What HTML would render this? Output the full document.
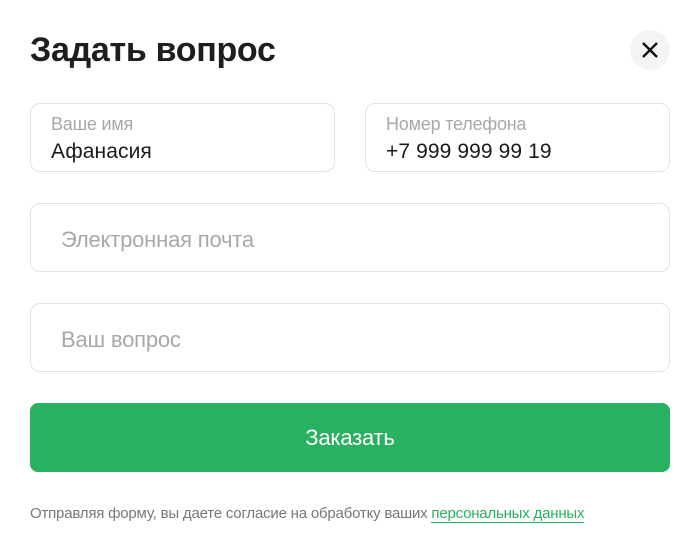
<!DOCTYPE html>
<html><head><meta charset="utf-8"><style>
*{box-sizing:border-box;margin:0;padding:0}
body{width:700px;height:552px;background:#fff;font-family:"Liberation Sans",sans-serif;position:relative;overflow:hidden;color:#1a1a1a}
h1{position:absolute;left:30px;top:31px;font-size:34px;font-weight:bold;letter-spacing:-0.3px;color:#1e1e1e}
.close{position:absolute;left:630px;top:30px;width:40px;height:40px;border-radius:50%;background:#f4f4f4}
.f{position:absolute;border:1px solid #e2e2e2;border-radius:10px;height:69px}
.lab{position:absolute;left:20px;top:10px;font-size:18px;color:#a8a8a8;letter-spacing:-0.2px}
.val{position:absolute;left:20px;top:36px;font-size:21px;color:#1a1a1a;letter-spacing:0.1px}
.ph{position:absolute;left:30px;top:23px;font-size:22px;color:#a8a8a8;letter-spacing:-0.2px}
.btn{position:absolute;left:30px;top:403px;width:640px;height:69px;border-radius:8px;background:#28b160;color:#fff;font-size:22px;text-align:center;line-height:69px;letter-spacing:-0.2px}
.foot{position:absolute;left:30px;top:505px;font-size:15px;color:#777;letter-spacing:-0.2px}
.foot span{color:#28b160;border-bottom:1px solid #28b160}
</style></head><body>
<h1>Задать вопрос</h1>
<div class="close"><svg width="40" height="40" viewBox="0 0 40 40"><path d="M13 13L27 27M27 13L13 27" stroke="#111" stroke-width="2.4"/></svg></div>
<div class="f" style="left:30px;top:103px;width:305px"><div class="lab">Ваше имя</div><div class="val">Афанасия</div></div>
<div class="f" style="left:365px;top:103px;width:305px"><div class="lab">Номер телефона</div><div class="val">+7 999 999 99 19</div></div>
<div class="f" style="left:30px;top:203px;width:640px"><div class="ph">Электронная почта</div></div>
<div class="f" style="left:30px;top:303px;width:640px"><div class="ph">Ваш вопрос</div></div>
<div class="btn">Заказать</div>
<div class="foot">Отправляя форму, вы даете согласие на обработку ваших <span>персональных данных</span></div>
</body></html>
